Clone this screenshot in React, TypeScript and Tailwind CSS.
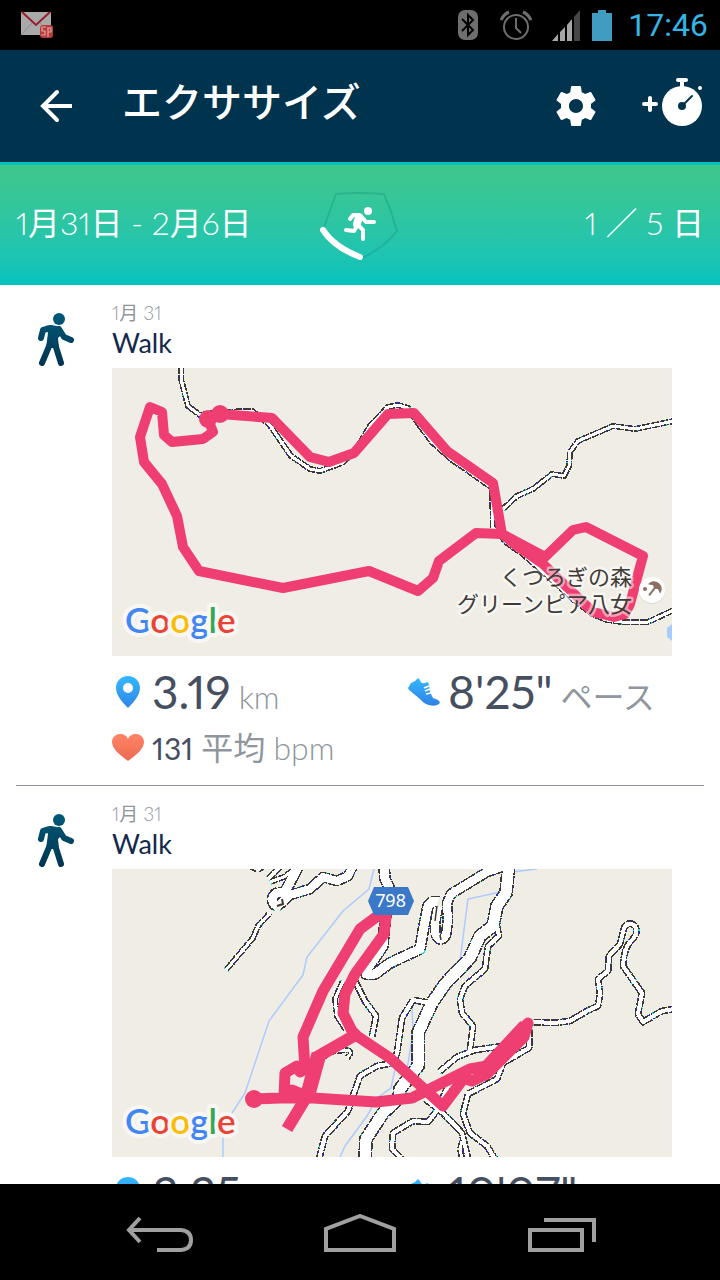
const ROUTE = "#ef3e70";

type RoadProps = { d: string; width: number };

function Road({ d, width }: RoadProps) {
  return (
    <g fill="none" strokeLinejoin="round" shapeRendering="crispEdges">
      <path d={d} stroke="#3c3832" strokeWidth={width + 3} strokeDasharray="8 1" />
      <path d={d} stroke="#2222ee" strokeWidth={width + 3} strokeDasharray="1 10" />
      <path d={d} stroke="#22dddd" strokeWidth={width + 3} strokeDasharray="1 28" />
    </g>
  );
}

// casings go down first so that crossings stay open
function Roads({ roads }: { roads: RoadProps[] }) {
  return (
    <>
      {roads.map((road) => (
        <Road key={road.d} {...road} />
      ))}
      {roads.map((road) => (
        <path
          key={road.d}
          d={road.d}
          fill="none"
          stroke="#fff"
          strokeWidth={road.width}
          strokeLinejoin="round"
          shapeRendering="crispEdges"
        />
      ))}
    </>
  );
}

function GoogleMark() {
  return (
    <text
      x="13"
      y="265"
      fontSize="35"
      stroke="#f8f7f4"
      strokeWidth="8"
      strokeLinejoin="round"
      paintOrder="stroke"
      className="font-['Lato',sans-serif] font-semibold"
    >
      <tspan fill="#4285f4">G</tspan>
      <tspan fill="#ea4335">o</tspan>
      <tspan fill="#fbbc05">o</tspan>
      <tspan fill="#4285f4">g</tspan>
      <tspan fill="#34a853">l</tspan>
      <tspan fill="#ea4335">e</tspan>
    </text>
  );
}

const loopRoads: RoadProps[] = [
  { d: "M69-2V11L76 38L88 47L108 44L140 43L157 56L179 88L198 101L208 103L230 95L242 85L248 75L258 58L276 39L286 37L296 40L308 58L320 74L340 92L355 102L380 120L381 160L395 175L412 187L462 232L480 246L495 252L510 254H536L562 242", width: 3 },
  { d: "M391 141L405 128L421 121L440 106L452 108L457 98L458 84L466 73L501 58L523 61L562 53", width: 3 },
];

function LoopMap() {
  return (
    <svg viewBox="0 0 560 288" className="block h-auto w-full bg-[#f0ede5]" role="img" aria-label="Map">
      <path d="M560 256L555 260V269L560 273Z" fill="#a9cbff" />
      <Roads roads={loopRoads} />
      <path
        d="M96 51L101 64L91 71L60 74L52 67L50 44L38 39L28 69L32 94L50 116L65 148L71 179L87 203L171 220L257 203L306 223L321 210L327 193L364 165L390 166L433 189L461 162L474 159L531 188L518 236L513 246L502 249L481 244L431 196L405 178L390 166L381 115L335 83L302 45L276 46L242 85L217 94L198 89L160 50L108 46"
        fill="none"
        stroke={ROUTE}
        strokeWidth="10"
        strokeLinejoin="round"
      />
      <path d="M390 166L433 189L431 196Z" fill={ROUTE} stroke={ROUTE} strokeWidth="6" />
      <circle cx="96" cy="51" r="9" fill={ROUTE} />
      <circle cx="108" cy="46" r="9" fill={ROUTE} />
      <text
        y="217"
        fontSize="22"
        textAnchor="end"
        fill="#3f3b37"
        stroke="#ffffff"
        strokeOpacity="0.5"
        strokeWidth="5"
        strokeLinejoin="round"
        paintOrder="stroke"
        className="font-['Noto_Sans_CJK_JP',sans-serif]"
      >
        <tspan x="520">くつろぎの森</tspan>
        <tspan x="520" dy="27">
          グリーンピア八女
        </tspan>
      </text>
      <circle cx="540" cy="223" r="13" fill="#d9d6cf" />
      <circle cx="540" cy="222" r="13" fill="#fff" />
      <g transform="translate(542 221) rotate(38)" stroke="#8d6e63" fill="none">
        <path d="M-7 -1Q-6 -7 0 -7Q6 -7 7 -1L3 -3L0 -1L-3 -3Z" fill="#8d6e63" strokeWidth="1" />
        <path d="M0 -7V8" strokeWidth="2" />
      </g>
      <circle cx="533" cy="221" r="2" fill="#8d6e63" />
      <GoogleMark />
    </svg>
  );
}

const hillRoads: RoadProps[] = [
  { d: "M114 101L141 69L146 57L158 44", width: 3 },
  { d: "M138 -3L146 1L152 -3M156 10L170 -4M158 13L172 8L188 -4", width: 3 },
  { d: "M165 37A7 7 0 1 1 172 25L188 -6", width: 9 },
  { d: "M165 38L178 26L198 20L211 8L225 12L236 7L242 -5", width: 8 },
  { d: "M231 112L223 130L225 147L234 161", width: 3 },
  { d: "M243 112L253 132L264 147L260 168", width: 4 },
  { d: "M209 190L218 183L234 181Q242 182 235 189", width: 3 },
  { d: "M318 134L301 131L290 149L285 184L281 194L265 197L248 207L241 227L236 242L213 267L207 290", width: 4 },
  { d: "M385 57L387 67L376 77L373 100L353 117L348 130L350 144L361 157L358 181", width: 4 },
  { d: "M327 203L345 188L363 181L391 177", width: 4 },
  { d: "M417 160V179L391 194L385 210L356 225L351 245L358 264L375 277L383 290", width: 4 },
  { d: "M313 230L331 244L350 264L356 290M336 217L326 240L316 253L301 252L281 264L280 280L290 290", width: 4 },
  { d: "M350 272L348 280L350 290", width: 3 },
  { d: "M421 153L442 154L458 152L475 142L486 137L488 125L486 110L496 102L497 87L508 75L512 59Q518 50 524 59Q526 66 518 73Q512 80 511 97L530 124L526 145L531 153L550 142L562 140", width: 4 },
  { d: "M272 -3L273 10L277 18L272 63L271 77L256 99L254 105H263L278 94L308 80L312 57L316 37Q320 31 326 33", width: 9 },
  { d: "M326 38L323 54V64Q328 76 334 66L336 52L335 34L339 25L375 3L393 -3", width: 8 },
  { d: "M396 -3V4L394 24L385 37L381 57L368 67L358 89L333 115L320 134L306 164V197L288 220L287 229L271 244L254 270L253 290", width: 11 },
];

function HillMap() {
  return (
    <svg viewBox="0 0 560 288" className="block h-auto w-full bg-[#f0ede5]" role="img" aria-label="Map">
      <g fill="none" stroke="#abcbff" strokeWidth="1.5">
        <path d="M262 0L257 20L231 42L195 88L191 106L157 152L133 224L118 247L111 264V288" />
        <path d="M388 23L356 30L348 92M425 0L400 3M300 137L301 164L295 200M283 200L279 219L265 229L255 247L233 277L228 288" />
      </g>
      <Roads roads={hillRoads} />
      <path d="M165 37L171 35L170 30" fill="none" stroke="#3c3832" strokeWidth="2" />
      <path d="M325 37L323 52M328 66L329 71" fill="none" stroke="#3c3832" strokeWidth="1.5" />
      <g fill="none" stroke={ROUTE} strokeWidth="11" strokeLinejoin="round">
        <path d="M142 230L168 229L201 229L264 233L300 229L358 200L375 197L416 154L412 168L375 205L360 212L352 209L331 237L278 189L245 167L240 162L231 144L233 125L243 105L272 65L275 40L248 60L211 122L191 168L193 200L188 203L185 197L173 204L172 227L180 221L195 227" />
        <path d="M245 165L205 188L195 227L175 260" strokeWidth="12" />
        <path d="M207 185L196 225" strokeWidth="15" />
        <path d="M414 157L372 202" strokeWidth="15" />
      </g>
      <circle cx="142" cy="230" r="9" fill={ROUTE} />
      <path d="M262 18H296L302 32L296 46H262L256 32Z" fill="#3b78c8" />
      <text x="279" y="38" fontSize="18" textAnchor="middle" fill="#fff" className="font-['Noto_Sans',sans-serif]">
        798
      </text>
      <GoogleMark />
    </svg>
  );
}

function WalkIcon() {
  return (
    <svg viewBox="-2 0 40 54" className="h-[54px] w-10" aria-hidden="true">
      <defs>
        <linearGradient id="walk" gradientUnits="userSpaceOnUse" x1="0" y1="0" x2="0" y2="54">
          <stop offset="0" stopColor="#005a78" />
          <stop offset="1" stopColor="#003350" />
        </linearGradient>
      </defs>
      <circle cx="21" cy="6" r="6" fill="url(#walk)" />
      <path d="M7 13Q15 11 22 14L25 20L20 25L21 35H8L10 20Z" fill="url(#walk)" />
      <path
        d="M13 15L5 17L3 25M21 16L26 24L33 27M12 31L4 50M17 31L23 50"
        fill="none"
        stroke="url(#walk)"
        strokeWidth="6"
        strokeLinecap="round"
        strokeLinejoin="round"
      />
    </svg>
  );
}

function PinIcon() {
  return (
    <svg viewBox="0 0 32 32" className="size-8" aria-hidden="true">
      <defs>
        <linearGradient id="pin" x1="0" y1="0" x2="0" y2="1">
          <stop offset="0" stopColor="#35b8ff" />
          <stop offset="1" stopColor="#2f86e6" />
        </linearGradient>
      </defs>
      <path
        d="M16 0C9 0 4 5 4 12C4 20 12 28 16 32C20 28 28 20 28 12C28 5 23 0 16 0ZM16 7A5 5 0 1 1 16 17A5 5 0 1 1 16 7Z"
        fill="url(#pin)"
        fillRule="evenodd"
      />
    </svg>
  );
}

function ShoeIcon() {
  return (
    <svg viewBox="0 0 32 32" className="size-8" aria-hidden="true">
      <defs>
        <linearGradient id="shoe" x1="0" y1="0" x2="0" y2="1">
          <stop offset="0" stopColor="#35b8ff" />
          <stop offset="1" stopColor="#2f80e4" />
        </linearGradient>
      </defs>
      <path
        d="M10 2L12 4Q13 8 17 7L20 6L21 9L22 16L25 22L30 24Q33 26 31 28Q27 31 21 29Q16 28 12 23L1 14L0 12L3 7L7 5Z"
        fill="url(#shoe)"
      />
      <path d="M16 12L21 10M17 15L22 13M18 18L23 17" stroke="#fff" strokeWidth="1.6" />
    </svg>
  );
}

function HeartIcon() {
  return (
    <svg viewBox="0 0 32 28" className="h-7 w-8" aria-hidden="true">
      <defs>
        <linearGradient id="heart" x1="0" y1="0" x2="0" y2="1">
          <stop offset="0" stopColor="#ff8468" />
          <stop offset="1" stopColor="#ec6a50" />
        </linearGradient>
      </defs>
      <path
        d="M16 27C8 21 0 15 0 8C0 3 4 0 8 0C12 0 15 2 16 5C17 2 20 0 24 0C28 0 32 3 32 8C32 15 24 21 16 27Z"
        fill="url(#heart)"
      />
    </svg>
  );
}

function StatusBar() {
  return (
    <div className="flex h-[50px] shrink-0 items-center bg-black pr-3 pl-5">
      <svg viewBox="0 0 34 28" className="h-7 w-[34px]" aria-label="Mail">
        <path d="M1 1H31V24H1Z" fill="#aaa" />
        <path d="M1 24L12 12M31 24L20 12" stroke="#8c8c8c" />
        <path d="M2 1L16 14L30 1" fill="none" stroke="#9a1c2c" strokeWidth="2" />
        <rect x="20" y="14" width="13" height="13" rx="3" fill="#b83a3a" />
        <path d="M26 16H22V20H25V24H21M27 17H31V21H28M28 17V26" fill="none" stroke="#e0a5a5" strokeWidth="1.2" />
      </svg>
      <svg viewBox="0 0 20 32" className="ml-auto h-8 w-5" aria-label="Bluetooth">
        <rect y="1" width="20" height="30" rx="7" fill="#6e6e6e" />
        <path d="M4 10L15 21L10 26V6L15 11L4 22" fill="none" stroke="#000" strokeWidth="2" />
      </svg>
      <svg viewBox="0 0 32 32" className="ml-[22px] size-8" aria-label="Alarm">
        <g fill="none" stroke="#6e6e6e" strokeWidth="2">
          <circle cx="16" cy="18" r="12" />
          <path d="M16 9V19L21 24" />
          <path d="M1 11Q4 5 9 3M31 11Q28 5 23 3" strokeWidth="3" />
        </g>
      </svg>
      <svg viewBox="0 0 28 32" className="ml-5 h-8 w-7" aria-label="Signal">
        <path d="M0 32L6 25V32ZM8 23L13 18V32H8ZM15 16L20 10V32H15Z" fill="#a6a6a6" />
        <path d="M22 8L28 1V32H22Z" fill="#474747" />
      </svg>
      <svg viewBox="0 0 20 32" className="ml-3 h-8 w-5" aria-label="Battery">
        <path d="M6 1H14V4H20V32H0V4H6Z" fill="#419cc1" />
      </svg>
      <span className="ml-4 font-['Roboto',sans-serif] text-[32px] leading-10 text-[#33b5e5] tabular-nums">17:46</span>
    </div>
  );
}

function AppBar() {
  return (
    <header className="flex h-28 shrink-0 items-center bg-[#00334d] pr-4 pl-10 text-white">
      <button aria-label="Back">
        <svg viewBox="0 0 34 34" className="block size-[34px]" fill="none" stroke="#fff" strokeWidth="4">
          <path d="M32 17H4" />
          <path d="M17 3L3 17L17 31" strokeLinecap="round" />
        </svg>
      </button>
      <h1 className="ml-12 pb-2 text-[40px] leading-none font-medium">エクササイズ</h1>
      <button aria-label="Settings" className="ml-auto">
        <svg viewBox="0 0 24 24" className="block size-12" fill="currentColor">
          <path d="M19.43 12.98c.04-.32.07-.64.07-.98s-.03-.66-.07-.98l2.11-1.65c.19-.15.24-.42.12-.64l-2-3.46c-.12-.22-.39-.3-.61-.22l-2.49 1c-.52-.4-1.08-.73-1.69-.98l-.38-2.65C14.46 2.18 14.25 2 14 2h-4c-.25 0-.46.18-.49.42l-.38 2.65c-.61.25-1.17.59-1.69.98l-2.49-1c-.23-.09-.49 0-.61.22l-2 3.46c-.13.22-.07.49.12.64l2.11 1.65c-.04.32-.07.65-.07.98s.03.66.07.98l-2.11 1.65c-.19.15-.24.42-.12.64l2 3.46c.12.22.39.3.61.22l2.49-1c.52.4 1.08.73 1.69.98l.38 2.65c.03.24.24.42.49.42h4c.25 0 .46-.18.49-.42l.38-2.65c.61-.25 1.17-.59 1.69-.98l2.49 1c.23.09.49 0 .61-.22l2-3.46c.12-.22.07-.49-.12-.64l-2.11-1.65zM12 15.5c-1.93 0-3.5-1.57-3.5-3.5s1.57-3.5 3.5-3.5 3.5 1.57 3.5 3.5-1.57 3.5-3.5 3.5z" />
        </svg>
      </button>
      <button aria-label="Add exercise" className="ml-[42px]">
        <svg viewBox="0 0 62 58" className="block h-[58px] w-[62px]">
          <path d="M2 27H14M8 21V33" stroke="#fff" strokeWidth="4" strokeLinecap="round" />
          <circle cx="40" cy="29" r="20" fill="#fff" />
          <path d="M36 3H44" stroke="#fff" strokeWidth="4" strokeLinecap="round" />
          <path d="M40 3V12" stroke="#fff" strokeWidth="4" />
          <circle cx="58" cy="11" r="2" fill="#fff" />
          <circle cx="40" cy="29" r="4" fill="#00334d" />
          <path d="M40 29L50 19" stroke="#00334d" strokeWidth="2" strokeLinecap="round" />
        </svg>
      </button>
    </header>
  );
}

function WeekBanner() {
  return (
    <section className="grid h-[123px] shrink-0 grid-cols-[1fr_auto_1fr] items-center border-t-3 border-[#05c3bd] bg-linear-to-b from-[#40c78a] to-[#05c3bd] px-4 pb-1 text-[32px] leading-10 font-light text-white">
      <span className="whitespace-nowrap">
        1<span className="font-normal">月</span>31<span className="font-normal">日</span> - 2
        <span className="font-normal">月</span>6<span className="font-normal">日</span>
      </span>
      <svg viewBox="1 -4 82 74" className="h-[74px] w-[82px]" aria-hidden="true">
        <path
          d="M5 40L18 4Q42 2 66 4Q74 22 79 41Q66 58 42 69Q19 58 5 40Z"
          fill="none"
          stroke="#0a7a72"
          strokeOpacity="0.25"
          strokeWidth="2"
        />
        <path d="M5 40Q16 57 42 67" fill="none" stroke="#fff" strokeWidth="6" strokeLinecap="round" />
        <circle cx="50" cy="21" r="4" fill="#fff" />
        <path
          d="M41 25H35L32 29M43 26L48 32H56M40 35L45 40V49M39 36L36 41L28 40"
          fill="none"
          stroke="#fff"
          strokeWidth="4"
          strokeLinecap="round"
          strokeLinejoin="round"
        />
        <path d="M41 27L39 34" stroke="#fff" strokeWidth="8" strokeLinecap="round" />
      </svg>
      <span className="text-right whitespace-nowrap">
        1 ／ 5 <span className="font-normal">日</span>
      </span>
    </section>
  );
}

type ExerciseProps = {
  map: React.ReactNode;
  distance: string;
  pace: string;
  heartRate: string;
};

function Exercise({ map, distance, pace, heartRate }: ExerciseProps) {
  return (
    <article className="mx-4 flex border-b border-[#8f9399]">
      <div className="w-24 shrink-0 pt-7 pl-5">
        <WalkIcon />
      </div>
      <div className="min-w-0 flex-1 pt-4 pb-[17px]">
        <p className="text-[19px] leading-6 font-light text-[#8f969e]">
          1<span className="font-normal">月</span> 31
        </p>
        <h2 className="text-[27px] leading-9 text-[#12284c]">Walk</h2>
        <div className="mt-[7px] mr-8">{map}</div>
        <div className="grid h-[72px] grid-cols-2 items-center whitespace-nowrap text-[#454f5f]">
          <p className="flex items-center gap-2">
            <PinIcon />
            <span className="text-[46px] leading-none">
              {distance}
              <span className="ml-2 text-[32px] font-light text-[#8f969e]">km</span>
            </span>
          </p>
          <p className="flex items-center gap-2">
            <ShoeIcon />
            <span className="text-[46px] leading-none">
              {pace}
              <span className="ml-2 text-[32px] text-[#8f969e]">ペース</span>
            </span>
          </p>
        </div>
        <p className="flex h-10 items-center gap-2 text-[32px] leading-10 text-[#8f969e]">
          <HeartIcon />
          <span>
            <span className="text-[30px] text-[#454f5f]">{heartRate}</span> 平均 <span className="font-light">bpm</span>
          </span>
        </p>
      </div>
    </article>
  );
}

function NavBar() {
  return (
    <nav className="grid h-24 shrink-0 grid-cols-[1fr_200px_200px_200px_1fr] items-center bg-black pt-1">
      <button aria-label="Back" className="col-start-2 flex justify-center">
        <svg viewBox="0 0 80 40" className="h-10 w-20" fill="none" stroke="#a0a0a0" strokeWidth="4">
          <path d="M9 16H61Q71 17 71 26Q71 35 61 36H37" />
          <path d="M20 4L9 16L20 28" />
        </svg>
      </button>
      <button aria-label="Home" className="flex justify-center">
        <svg viewBox="0 0 80 40" className="h-10 w-20" fill="none" stroke="#a0a0a0" strokeWidth="4">
          <path d="M6 36V15L40 2L74 15V36Z" />
        </svg>
      </button>
      <button aria-label="Recent apps" className="flex justify-center">
        <svg viewBox="0 0 80 40" className="h-10 w-20" fill="none" stroke="#a0a0a0" strokeWidth="4">
          <path d="M10 16H62V36H10Z" />
          <path d="M24 6H74V28" />
        </svg>
      </button>
    </nav>
  );
}

export default function App() {
  return (
    <div className="flex h-screen flex-col overflow-hidden bg-white font-['Lato','Noto_Sans_CJK_JP',sans-serif] proportional-nums">
      <StatusBar />
      <AppBar />
      <WeekBanner />
      <main className="min-h-0 flex-1 overflow-hidden">
        <Exercise map={<LoopMap />} distance="3.19" pace={`8'25"`} heartRate="131" />
        <Exercise map={<HillMap />} distance="3.35" pace={`10'07"`} heartRate="128" />
      </main>
      <NavBar />
    </div>
  );
}
